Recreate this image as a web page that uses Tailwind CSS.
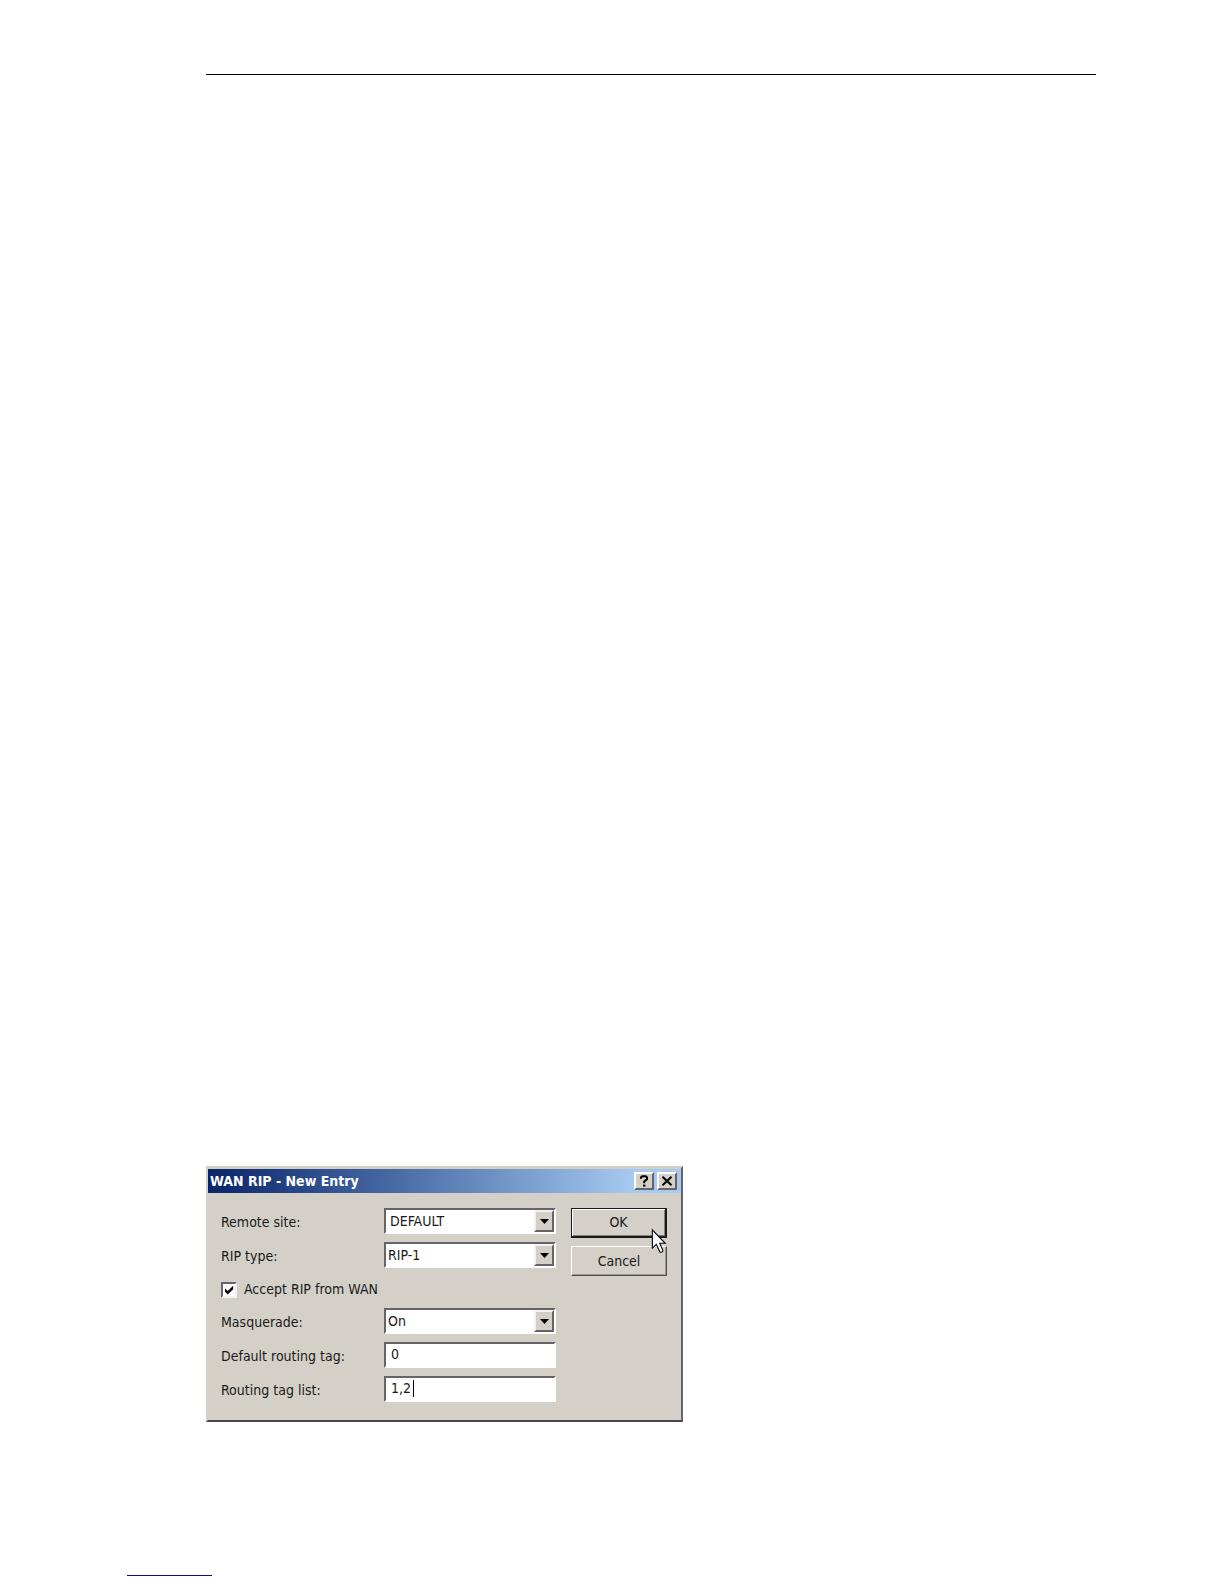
<!DOCTYPE html>
<html lang="en">
  <head>
    <meta charset="UTF-8" />
    <meta name="viewport" content="width=device-width, initial-scale=1.0" />
    <title>WAN RIP - New Entry</title>
    <script src="https://cdn.jsdelivr.net/npm/@tailwindcss/browser@4"></script>
  </head>
  <body class="bg-white">
    <div class="flex min-h-screen flex-col pt-[74px] pb-2">
      <!-- Page header rule -->
      <header class="ml-[206px] mr-32 border-t border-black"></header>

      <main class="mt-auto ml-[206px] mr-32 pb-[153px]">
        <!-- Dialog window -->
        <form
          class="w-[477px] max-w-full border-2 border-t-[#d4d0c8] border-l-[#d4d0c8] border-r-[#66646a] border-b-[#4c484e] bg-[#d4d0c8] pb-[18px] font-['DejaVu_Sans_Condensed','DejaVu_Sans',sans-serif] text-[14px] text-[#1a1a1a]"
        >
          <!-- Title bar -->
          <div
            class="mt-px flex h-6 items-center gap-[3px] bg-linear-to-r from-[#0a246a] to-[#a6caf0] to-90% pl-[2px] pr-1"
          >
            <h1 class="mr-auto text-[14px] font-bold text-white">WAN RIP - New Entry</h1>
            <button
              type="button"
              aria-label="Help"
              class="flex h-[18px] w-5 items-center justify-center border-2 border-t-white border-l-white border-r-[#66646a] border-b-[#66646a] bg-[#d4d0c8]"
            >
              <svg class="h-3 w-3" viewBox="0 0 12 12" fill="none" stroke="#000" stroke-width="2">
                <path d="M3 3.8V2.5L4.2 1.3H7.8L9 2.5V4.2L6.2 6.4V8.2" />
                <path d="M6.2 9.6V11.6" stroke-width="2.4" />
              </svg>
            </button>
            <button
              type="button"
              aria-label="Close"
              class="flex h-[18px] w-5 items-center justify-center border-2 border-t-white border-l-white border-r-[#66646a] border-b-[#66646a] bg-[#d4d0c8]"
            >
              <svg class="h-3 w-3" viewBox="0 0 12 12" fill="none" stroke="#000" stroke-width="2">
                <path d="M1.5 1.8L10.5 10.2M10.5 1.8L1.5 10.2" />
              </svg>
            </button>
          </div>

          <div class="mt-[15px] flex items-start justify-between pl-[13px] pr-[14px]">
            <!-- Fields -->
            <div class="flex w-[335px] flex-col gap-2">
              <div class="flex h-[26px] items-center">
                <label for="remote" class="w-[163px] pt-[2px]">Remote site:</label>
                <div
                  class="flex h-full flex-1 border-2 border-t-[#66646a] border-l-[#66646a] border-r-white border-b-white bg-white"
                >
                  <select id="remote" class="min-w-0 flex-1 appearance-none pl-1 outline-none">
                    <option>DEFAULT</option>
                  </select>
                  <span
                    class="flex w-5 items-center justify-center border-2 border-t-[#f4f2ee] border-l-[#f4f2ee] border-r-[#66646a] border-b-[#66646a] bg-[#d4d0c8]"
                  >
                    <svg class="h-[5px] w-[9px]" viewBox="0 0 9 5"><path d="M0 0H9L4.5 5Z" /></svg>
                  </span>
                </div>
              </div>

              <div class="flex h-[26px] items-center">
                <label for="type" class="w-[163px] pt-[2px]">RIP type:</label>
                <div
                  class="flex h-full flex-1 border-2 border-t-[#66646a] border-l-[#66646a] border-r-white border-b-white bg-white"
                >
                  <select id="type" class="min-w-0 flex-1 appearance-none pl-[2px] pt-px outline-none">
                    <option>RIP-1</option>
                  </select>
                  <span
                    class="flex w-5 items-center justify-center border-2 border-t-[#f4f2ee] border-l-[#f4f2ee] border-r-[#66646a] border-b-[#66646a] bg-[#d4d0c8]"
                  >
                    <svg class="h-[5px] w-[9px]" viewBox="0 0 9 5"><path d="M0 0H9L4.5 5Z" /></svg>
                  </span>
                </div>
              </div>

              <div class="flex h-6 items-center pt-[3px]">
                <span class="relative mr-[7px] h-4 w-4">
                  <input
                    id="accept"
                    type="checkbox"
                    checked
                    class="block h-4 w-4 appearance-none border-2 border-t-[#66646a] border-l-[#66646a] border-r-[#f4f2ee] border-b-[#f4f2ee] bg-white"
                  />
                  <svg
                    class="pointer-events-none absolute inset-0 h-4 w-4"
                    viewBox="0 0 16 16"
                    fill="#000"
                  >
                    <path d="M4 6.5L6.7 9L12.2 3.8V7.2L6.7 12.4L4 9.8Z" />
                  </svg>
                </span>
                <label for="accept">Accept RIP from WAN</label>
              </div>

              <div class="flex h-[26px] items-center">
                <label for="masq" class="w-[163px] pt-[2px]">Masquerade:</label>
                <div
                  class="flex h-full flex-1 border-2 border-t-[#66646a] border-l-[#66646a] border-r-white border-b-white bg-white"
                >
                  <select id="masq" class="min-w-0 flex-1 appearance-none pl-[2px] pt-px outline-none">
                    <option>On</option>
                  </select>
                  <span
                    class="flex w-5 items-center justify-center border-2 border-t-[#f4f2ee] border-l-[#f4f2ee] border-r-[#66646a] border-b-[#66646a] bg-[#d4d0c8]"
                  >
                    <svg class="h-[5px] w-[9px]" viewBox="0 0 9 5"><path d="M0 0H9L4.5 5Z" /></svg>
                  </span>
                </div>
              </div>

              <div class="flex h-[26px] items-center">
                <label for="tag" class="w-[163px] pt-[2px]">Default routing tag:</label>
                <input
                  id="tag"
                  type="text"
                  value="0"
                  class="h-full min-w-0 flex-1 border-2 border-t-[#66646a] border-l-[#66646a] border-r-white border-b-white bg-white pb-[2px] pl-[5px] outline-none"
                />
              </div>

              <div class="flex h-[26px] items-center">
                <label for="list" class="w-[163px] pt-[2px]">Routing tag list:</label>
                <div class="relative h-full flex-1">
                  <input
                    id="list"
                    type="text"
                    value="1,2"
                    class="h-full w-full border-2 border-t-[#66646a] border-l-[#66646a] border-r-white border-b-white bg-white pb-[2px] pl-[5px] outline-none"
                  />
                  <!-- Text cursor -->
                  <span class="absolute top-1 left-[29px] h-[17px] w-px bg-black"></span>
                </div>
              </div>
            </div>

            <!-- Actions -->
            <div class="relative flex w-24 flex-col gap-2">
              <button
                type="button"
                class="h-[30px] border border-r-2 border-b-2 border-[#1a1a1a] bg-[#d4d0c8] shadow-[inset_1px_1px_0_#fff,inset_-1px_-1px_0_#808080]"
              >
                OK
              </button>
              <button
                type="button"
                class="h-[30px] border border-t-white border-l-white border-r-[#4c484e] border-b-[#4c484e] bg-[#d4d0c8] shadow-[inset_-1px_-1px_0_#a09c96]"
              >
                Cancel
              </button>
              <!-- Mouse pointer -->
              <svg
                class="pointer-events-none absolute top-5 left-20 h-[26px] w-4"
                viewBox="0 0 18 28"
                fill="#fff"
                stroke="#000"
                stroke-width="1.2"
              >
                <path d="M1.5 1.5V22L6 17.8L10 26.4Q12.5 27.4 13.4 24.8L9.8 16.6H16Z" />
              </svg>
            </div>
          </div>
        </form>
      </main>

      <!-- Footer link -->
      <footer class="ml-[127px]">
        <a href="#" aria-label="Home" class="block w-[85px] border-b border-[#0a0a9a]"></a>
      </footer>
    </div>
  </body>
</html>
